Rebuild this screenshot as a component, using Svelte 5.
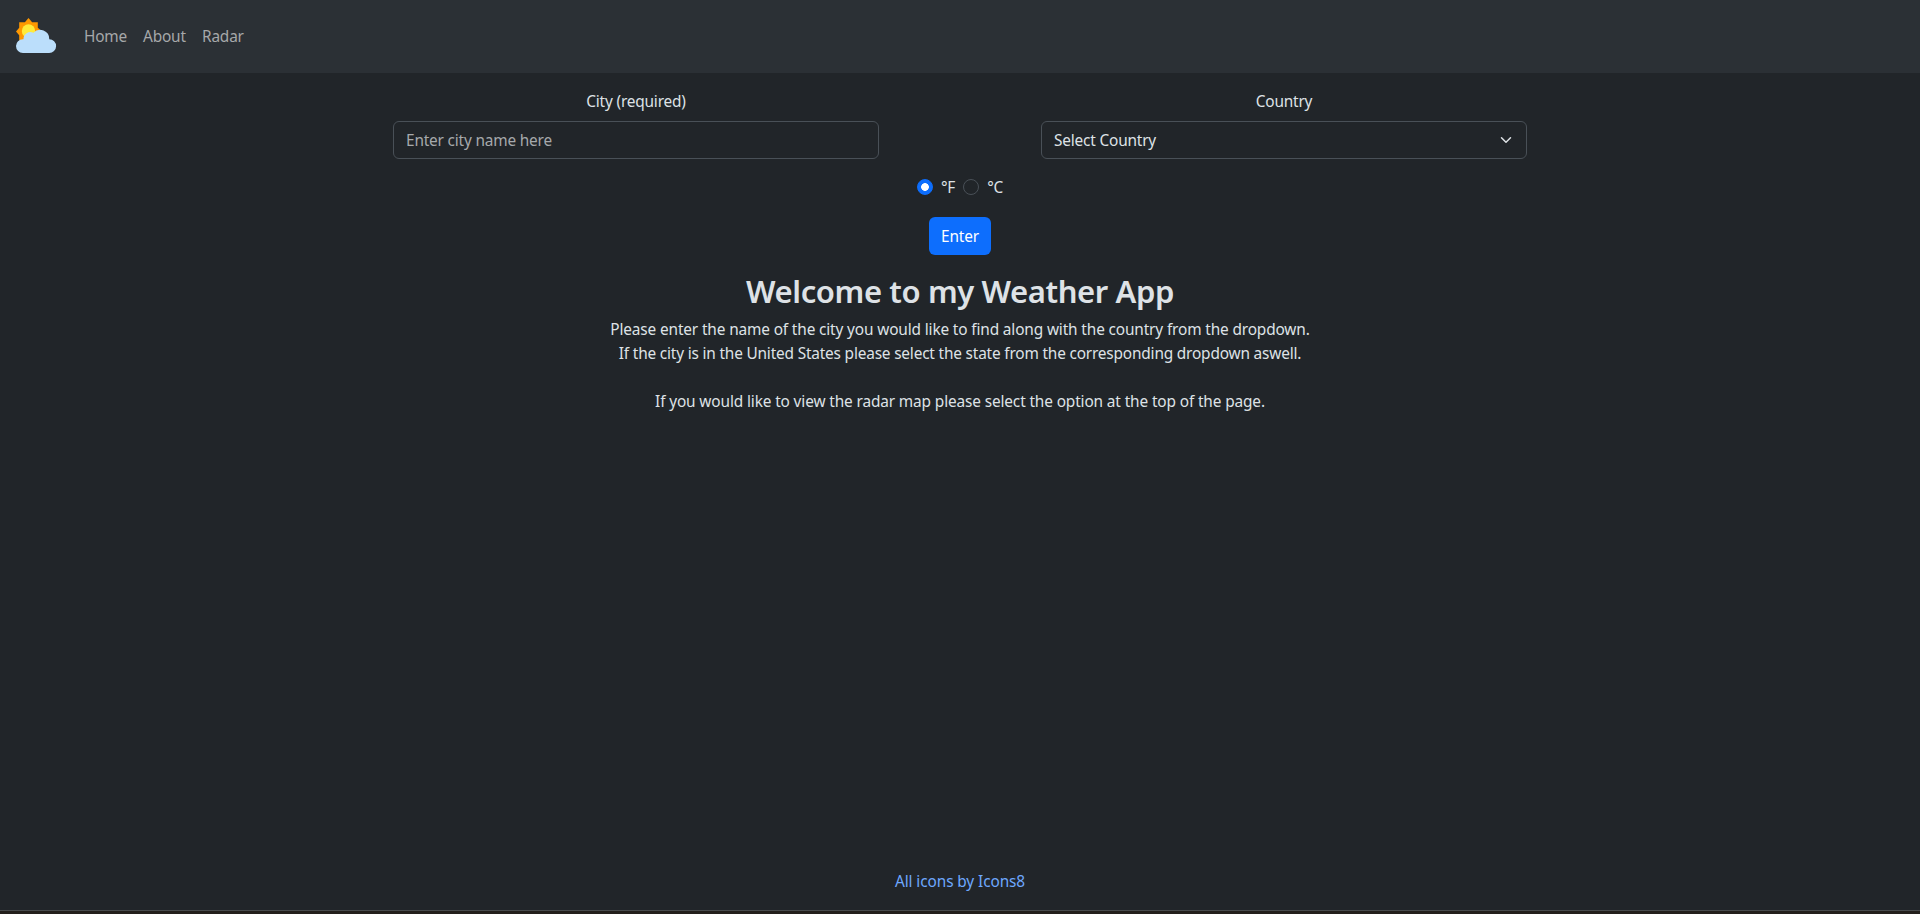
<script>
  let city = $state('');
  let unit = $state('F');
</script>

<div class="page">
  <nav>
    <a class="brand" href="#home" aria-label="Weather">
      <svg width="48" height="48" viewBox="0 0 48 48">
        <path fill="#ff9800" d="M16.500 5l3.600 4.200h5.700v5.600L30 18.500l-4.200 3.700v5.600h-5.700L16.500 32l-3.600-4.200H7.200v-5.600L4 18.500l3.200-3.700V9.200h5.700z" />
        <circle cx="16.500" cy="18" r="6.700" fill="#ffeb3b" />
        <path fill="#bbdefb" d="M37.300 26.200A9.200 9.200 0 0 0 21.400 19.800 6.800 6.800 0 0 0 11.500 26.200H10.900a6.900 6.900 0 1 0 0 13.800h26.200a6.900 6.900 0 1 0 .2-13.800z" />
      </svg>
    </a>
    <a class="link" href="#home">Home</a>
    <a class="link" href="#about">About</a>
    <a class="link" href="#radar">Radar</a>
  </nav>

  <main>
    <form onsubmit={(e) => e.preventDefault()}>
      <div class="fields">
        <div class="field">
          <label for="city">City (required)</label>
          <input id="city" class="control" type="text" placeholder="Enter city name here" bind:value={city} />
        </div>
        <div class="field">
          <label for="country">Country</label>
          <button id="country" type="button" class="control select">
            <span>Select Country</span>
            <svg width="16" height="12" viewBox="0 0 16 16">
              <path fill="none" stroke="#dee2e6" stroke-linecap="round" stroke-linejoin="round" stroke-width="2" d="m2 5 6 6 6-6" />
            </svg>
          </button>
        </div>
      </div>
      <div class="units">
        <label><input type="radio" name="unit" value="F" bind:group={unit} /><span>°F</span></label>
        <label><input type="radio" name="unit" value="C" bind:group={unit} /><span>°C</span></label>
      </div>
      <button class="submit" type="submit">Enter</button>
    </form>
    <h2>Welcome to my Weather App</h2>
    <p class="one">Please enter the name of the city you would like to find along with the country from the dropdown.</p>
    <p>If the city is in the United States please select the state from the corresponding dropdown aswell.</p>
    <p class="three">If you would like to view the radar map please select the option at the top of the page.</p>
  </main>

  <footer><a href="#icons">All icons by Icons8</a></footer>
  <div class="edge"></div>
</div>

<style>
  :global(body) { background: #212529; overflow: hidden; }
  * { box-sizing: border-box; }
  .page {
    height: 914px;
    display: flex;
    flex-direction: column;
    background: #212529;
    color: #dee2e6;
    font-family: "Noto Sans", "Open Sans", sans-serif;
    font-size: 15.4px;
    letter-spacing: -0.18px;
    line-height: 24px;
  }
  a { text-decoration: none; }
  nav {
    height: 73px;
    flex: none;
    display: flex;
    align-items: center;
    padding: 0 12px;
    background: #2b3035;
  }
  .brand { height: 48px; margin-right: 24px; }
  .brand svg { display: block; }
  .link { color: #a6a8aa; width: 59px; white-space: nowrap; }
  main { flex: 1; text-align: center; padding-top: 16px; }
  .fields { display: flex; justify-content: center; gap: 162px; }
  .field { width: 486px; }
  .field label { display: block; margin: 1px 0 7px; }
  .control {
    display: flex;
    width: 100%;
    height: 38px;
    padding: 6px 12px;
    border: 1px solid #495057;
    border-radius: 6px;
    background: #212529;
    color: #dee2e6;
    font: inherit;
    letter-spacing: inherit;
    outline: none;
  }
  .control::placeholder { color: #a6a9ac; opacity: 1; }
  .select { align-items: center; justify-content: space-between; padding: 7px 12px 5px; }
  .select svg { margin-bottom: 2px; }
  .units { display: flex; justify-content: center; gap: 8px; padding-top: 16px; }
  .units label { display: flex; align-items: center; }
  .units span { margin: 1px 0 -1px 8px; }
  .units input {
    appearance: none;
    width: 16px;
    height: 16px;
    margin: 0;
    border: 1px solid #495057;
    border-radius: 50%;
  }
  .units input:checked {
    border-color: #0d6efd;
    background: radial-gradient(circle, #fff 3.5px, #0d6efd 4.2px);
  }
  .submit {
    display: block;
    width: 62px;
    height: 38px;
    margin: 18px auto 0;
    padding: 1px 0 0;
    border: 0;
    border-radius: 6px;
    background: #0d6efd;
    color: #fff;
    font: inherit;
    letter-spacing: inherit;
  }
  h2 { margin: 17px 0 8px; font-size: 31px; line-height: 38px; font-weight: 600; letter-spacing: -0.4px; }
  p { margin: 0; }
  .one { letter-spacing: -0.14px; }
  .three { margin-top: 24px; letter-spacing: -0.13px; }
  footer { height: 40px; flex: none; text-align: center; letter-spacing: -0.1px; }
  footer a { color: #6ea8fe; }
  .edge { height: 4px; flex: none; background: #241f1c; border-top: 1px solid #494b4d; }
</style>
